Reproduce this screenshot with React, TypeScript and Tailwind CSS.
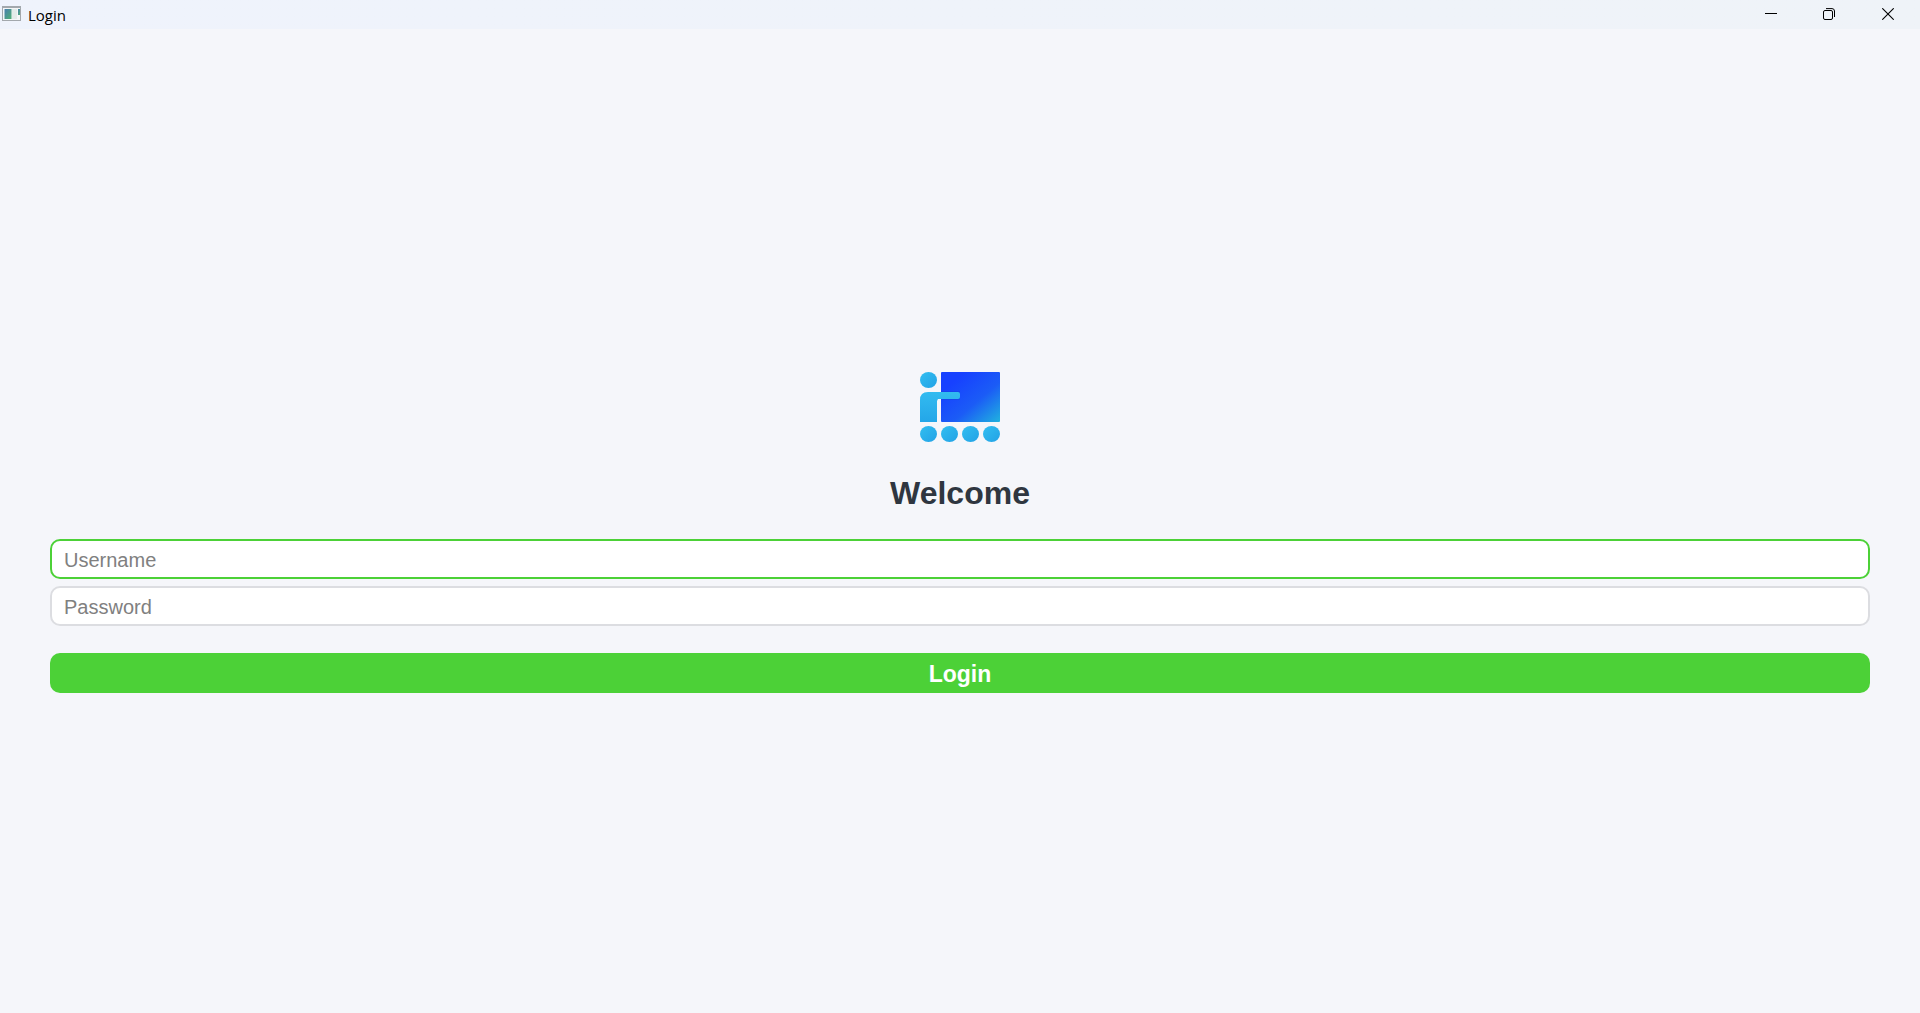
import React from "react";

function AppIcon() {
  return (
    <svg width="20" height="17" viewBox="0 0 20 17" aria-hidden="true">
      <defs>
        <linearGradient id="pane" x1="0" y1="0" x2="1" y2="1">
          <stop offset="0" stopColor="#4a7fb0" />
          <stop offset="1" stopColor="#4fb073" />
        </linearGradient>
      </defs>
      <rect x="0.5" y="0.5" width="18" height="14" fill="#f4f6f7" stroke="#a3a8ad" />
      <path d="M0 1H19" stroke="#a3a8ad" strokeWidth="2" />
      <rect x="2.5" y="3" width="7" height="10" fill="url(#pane)" />
      <rect x="10" y="3" width="5" height="10" fill="#e3ebe9" />
      <rect x="16" y="3" width="2" height="6" fill="url(#pane)" />
    </svg>
  );
}

function TitleBar() {
  return (
    <header className="flex h-[29px] items-center justify-between bg-linear-to-r from-[#eff3fc] to-[#eff3f8] px-0.5">
      <div className="flex items-center gap-1.5">
        <AppIcon />
        <span className="font-['Open_Sans','Noto_Sans',sans-serif] text-[15px] leading-5 text-black">Login</span>
      </div>
      <div className="flex h-full text-black">
        <button type="button" aria-label="Minimize" className="flex w-[58px] items-start justify-center pt-2">
          <svg width="12" height="12" viewBox="0 0 12 12" stroke="currentColor">
            <path d="M0 5.5H12" />
          </svg>
        </button>
        <button type="button" aria-label="Restore" className="flex w-[58px] items-start justify-center pt-2">
          <svg width="12" height="12" viewBox="0 0 12 12" fill="none" stroke="currentColor">
            <rect x="0.5" y="2.5" width="9" height="9" rx="1.5" />
            <path d="M3 0.6H9A2.5 2.5 0 0 1 11.5 3V9" />
          </svg>
        </button>
        <button type="button" aria-label="Close" className="flex w-[60px] items-start justify-center pt-2">
          <svg width="12" height="12" viewBox="0 0 12 12" stroke="currentColor" strokeWidth="1.1">
            <path d="M0.3 0.3L11.7 11.7M11.7 0.3L0.3 11.7" />
          </svg>
        </button>
      </div>
    </header>
  );
}

function Logo() {
  return (
    <svg width="80" height="70" viewBox="0 0 80 70" role="img" aria-label="Classroom logo">
      <defs>
        <linearGradient id="board" x1="0" y1="0" x2="1" y2="1">
          <stop offset="0.2" stopColor="#1741ff" />
          <stop offset="0.6" stopColor="#1b5cf6" />
          <stop offset="1" stopColor="#20b2de" />
        </linearGradient>
        <linearGradient id="person" x1="0" y1="0" x2="1" y2="1">
          <stop offset="0" stopColor="#32bef0" />
          <stop offset="1" stopColor="#22a2e6" />
        </linearGradient>
        <linearGradient id="body" x1="0" y1="0" x2="0" y2="1">
          <stop offset="0" stopColor="#32bbf0" />
          <stop offset="1" stopColor="#24a6e8" />
        </linearGradient>
      </defs>
      <rect x="21" y="0" width="59" height="50" rx="1" fill="url(#board)" />
      <path d="M21 19H40V28H21Z" fill="#123fd8" opacity="0.35" />
      <ellipse cx="8.5" cy="8" rx="8.5" ry="8" fill="url(#person)" />
      <path d="M8 20H38Q40 20 40 22V25Q40 27 38 27H18L17 29V50H0V28Q0 20 8 20Z" fill="url(#body)" />
      <ellipse cx="8.5" cy="62" rx="8.5" ry="8" fill="url(#person)" />
      <ellipse cx="29.5" cy="62" rx="8.5" ry="8" fill="url(#person)" />
      <ellipse cx="50.5" cy="62" rx="8.5" ry="8" fill="url(#person)" />
      <ellipse cx="71.5" cy="62" rx="8.5" ry="8" fill="url(#person)" />
    </svg>
  );
}

export default function App() {
  return (
    <div className="flex min-h-screen flex-col bg-[#f5f6fa] font-['Liberation_Sans',Arial,sans-serif]">
      <TitleBar />
      <main className="flex flex-1 flex-col justify-center px-[50px]">
        <form className="flex flex-col pt-[23px]" onSubmit={(e: React.FormEvent) => e.preventDefault()}>
          <div className="flex justify-center">
            <Logo />
          </div>
          <h1 className="mt-[31px] text-center text-[32px] leading-10 font-bold text-[#2f3640]">Welcome</h1>
          <input
            type="text"
            aria-label="Username"
            placeholder="Username"
            className="mt-[26px] h-10 rounded-[10px] border-2 border-[#4cd137] bg-white px-3 pt-0.5 text-[20px] text-[#2f3640] outline-none placeholder:text-[#808080]"
          />
          <input
            type="password"
            aria-label="Password"
            placeholder="Password"
            className="mt-[7px] h-10 rounded-[10px] border-2 border-[#dcdde1] bg-white px-3 pt-0.5 text-[20px] text-[#2f3640] outline-none placeholder:text-[#808080] focus:border-[#4cd137]"
          />
          <button type="submit" className="mt-[27px] h-10 rounded-[10px] bg-[#4cd137] pt-0.5 text-[23px] leading-9 font-bold text-white">
            Login
          </button>
        </form>
      </main>
    </div>
  );
}
